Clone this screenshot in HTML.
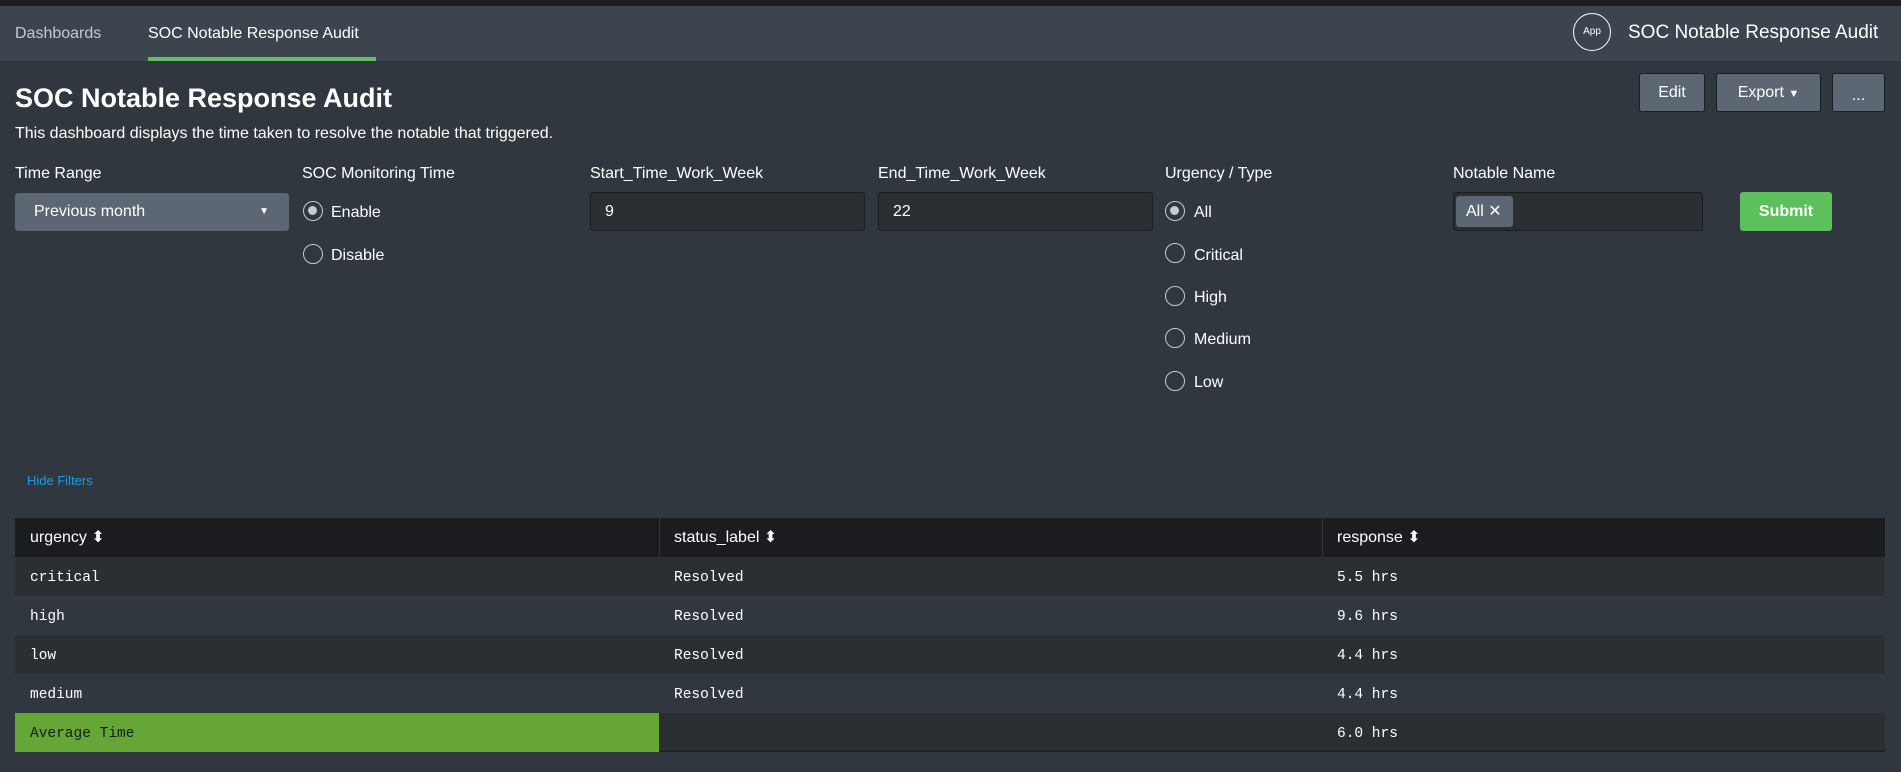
<!DOCTYPE html>
<html><head><style>
*{box-sizing:border-box;margin:0;padding:0}
body{width:1901px;height:772px;background:#31373e;font-family:"Liberation Sans",sans-serif;color:#fff;position:relative;overflow:hidden}
.a{position:absolute}
.mono{font-family:"Liberation Mono",monospace;font-size:14.5px}
.lbl{font-size:16px;color:#fff;top:165px}
.inp{background:#2b2f33;border:1px solid #1b1e21;border-radius:3px;height:39px;top:192px}
.radio{width:20px;height:20px;border:1.5px solid #c3cbd4;border-radius:50%}
.radio.on::after{content:"";position:absolute;left:4px;top:4px;width:9px;height:9px;border-radius:50%;background:#c3cbd4}
.rt{font-size:16px}
.btn{background:#5c6773;border:1px solid #1b1e21;border-radius:3px;top:73px;height:39px;font-size:16px;text-align:center;line-height:37px}
.row{left:15px;width:1870px;height:39px}
.c{position:absolute;top:0;line-height:39px}
.mono .c{top:2px}
</style></head><body>
<div class="a" style="left:0;top:0;width:1901px;height:6px;background:#1a1c20"></div>
<div class="a" style="left:0;top:6px;width:1901px;height:55px;background:#3c444d"></div>
<div class="a" style="left:15px;top:25px;font-size:16px;color:#c3cbd4">Dashboards</div>
<div class="a" style="left:148px;top:25px;font-size:16px;color:#fff">SOC Notable Response Audit</div>
<div class="a" style="left:148px;top:57px;width:228px;height:4px;background:#5cc05c"></div>
<div class="a" style="left:1573px;top:13px;width:38px;height:38px;border:1.5px solid #fff;border-radius:50%;font-size:10px;text-align:center;line-height:35px">App</div>
<div class="a" style="left:1628px;top:22px;font-size:19px">SOC Notable Response Audit</div>

<div class="a" style="left:15px;top:83px;font-size:27px;font-weight:bold">SOC Notable Response Audit</div>
<div class="a" style="left:15px;top:125px;font-size:16px">This dashboard displays the time taken to resolve the notable that triggered.</div>
<div class="a btn" style="left:1639px;width:66px">Edit</div>
<div class="a btn" style="left:1716px;width:105px">Export <span style="font-size:11px">▼</span></div>
<div class="a btn" style="left:1832px;width:53px;line-height:44px">...</div>

<div class="a lbl" style="left:15px">Time Range</div>
<div class="a" style="left:15px;top:193px;width:274px;height:38px;background:#5c6773;border-radius:3px;font-size:16px;line-height:38px;padding-left:19px">Previous month<span style="position:absolute;right:20px;font-size:10px">▼</span></div>

<div class="a lbl" style="left:302px">SOC Monitoring Time</div>
<div class="a radio on" style="left:303px;top:201px"></div><div class="a rt" style="left:331px;top:204px">Enable</div>
<div class="a radio" style="left:303px;top:244px"></div><div class="a rt" style="left:331px;top:247px">Disable</div>

<div class="a lbl" style="left:590px">Start_Time_Work_Week</div>
<div class="a inp" style="left:590px;width:275px;padding-left:14px;line-height:37px;font-size:16px">9</div>
<div class="a lbl" style="left:878px">End_Time_Work_Week</div>
<div class="a inp" style="left:878px;width:275px;padding-left:14px;line-height:37px;font-size:16px">22</div>

<div class="a lbl" style="left:1165px">Urgency / Type</div>
<div class="a radio on" style="left:1165px;top:201px"></div><div class="a rt" style="left:1194px;top:204px">All</div>
<div class="a radio" style="left:1165px;top:243px"></div><div class="a rt" style="left:1194px;top:247px">Critical</div>
<div class="a radio" style="left:1165px;top:286px"></div><div class="a rt" style="left:1194px;top:289px">High</div>
<div class="a radio" style="left:1165px;top:328px"></div><div class="a rt" style="left:1194px;top:331px">Medium</div>
<div class="a radio" style="left:1165px;top:371px"></div><div class="a rt" style="left:1194px;top:374px">Low</div>

<div class="a lbl" style="left:1453px">Notable Name</div>
<div class="a inp" style="left:1453px;width:250px"></div>
<div class="a" style="left:1456px;top:196px;width:57px;height:31px;background:#5c6773;border-radius:3px;font-size:16px;line-height:31px;padding-left:10px">All ✕</div>
<div class="a" style="left:1740px;top:192px;width:92px;height:39px;background:#5cc05c;border-radius:3px;font-size:16px;font-weight:bold;text-align:center;line-height:39px">Submit</div>

<div class="a" style="left:27px;top:473px;font-size:13px;color:#1a9cf0">Hide Filters</div>

<div class="a row" style="top:518px;background:#1a1c20;font-size:16px">
<div class="c" style="left:15px">urgency ⬍</div>
<div class="c" style="left:644px;height:39px;border-left:1px solid #31373e;padding-left:14px">status_label ⬍</div>
<div class="c" style="left:1307px;height:39px;border-left:1px solid #31373e;padding-left:14px">response ⬍</div>
</div>
<div class="a row mono" style="top:557px;background:#2b2f33"><div class="c" style="left:15px">critical</div><div class="c" style="left:659px">Resolved</div><div class="c" style="left:1322px">5.5 hrs</div></div>
<div class="a row mono" style="top:596px;background:#31373e"><div class="c" style="left:15px">high</div><div class="c" style="left:659px">Resolved</div><div class="c" style="left:1322px">9.6 hrs</div></div>
<div class="a row mono" style="top:635px;background:#2b2f33"><div class="c" style="left:15px">low</div><div class="c" style="left:659px">Resolved</div><div class="c" style="left:1322px">4.4 hrs</div></div>
<div class="a row mono" style="top:674px;background:#31373e"><div class="c" style="left:15px">medium</div><div class="c" style="left:659px">Resolved</div><div class="c" style="left:1322px">4.4 hrs</div></div>
<div class="a row mono" style="top:713px;background:#2b2f33;border-bottom:2px solid #1f2327"><div class="c" style="left:0;top:0;width:644px;height:39px;background:#65a637;color:#1a1c20;padding-left:15px;padding-top:2px">Average Time</div><div class="c" style="left:1322px">6.0 hrs</div></div>
</body></html>
